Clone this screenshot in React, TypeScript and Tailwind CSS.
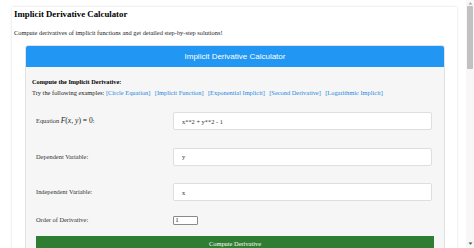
export default function App() {
  const examples = [
    "Circle Equation",
    "Implicit Function",
    "Exponential Implicit",
    "Second Derivative",
    "Logarithmic Implicit",
  ];

  return (
    <div className="flex h-[248px] w-[474px] overflow-hidden bg-white font-['Liberation_Serif',serif] text-[#222]">
      {/* PAGE */}
      <div className="min-w-0 flex-1 pl-3 pr-[9px] pt-[7px]">
        <div className="h-[260px] bg-white pl-[2px] shadow-[0_0_3px_rgba(0,0,0,0.13)]">
          <h1 className="pt-[2px] text-[8.8px] font-bold leading-[11px] text-black">
            Implicit Derivative Calculator
          </h1>
          <p className="mt-[9px] text-[6.4px] leading-[8px] text-[#222]">
            Compute derivatives of implicit functions and get detailed step-by-step solutions!
          </p>

          {/* CALCULATOR CARD */}
          <div className="ml-[11px] mr-[12px] mt-[8px] h-[220px] overflow-hidden rounded-[3px] border border-[#e2e2e2] bg-[#f6f6f6]">
            <div className="flex h-[21px] items-center justify-center bg-[#2196f3] font-['Liberation_Sans',sans-serif] text-[8px] text-white">
              Implicit Derivative Calculator
            </div>

            <div className="px-[6px] pt-[11px]">
              <div className="text-[6.3px] font-bold leading-[8px] text-black">
                Compute the Implicit Derivative:
              </div>
              <div className="mt-[2.5px] flex text-[6.4px] leading-[8px] text-[#222]">
                <span className="mr-[1.5px]">Try the following examples:</span>
                {examples.map((ex) => (
                  <span key={ex} className="mr-[4.3px] text-[#2a86e0]">
                    [{ex}]
                  </span>
                ))}
              </div>

              {/* FORM */}
              <div className="ml-[4px] w-[398px]">
                <Row label={<EquationLabel />} value="x**2 + y**2 - 1" className="mt-[15.5px]" />
                <Row label="Dependent Variable:" value="y" className="mt-[17.5px]" />
                <Row label="Independent Variable:" value="x" className="mt-[17.5px]" />

                <div className="mt-[14.5px] flex h-[9px] items-center">
                  <div className="w-[137px] text-[6.4px] text-[#333]">Order of Derivative:</div>
                  <div className="flex h-[9px] w-[25px] items-center rounded-[1px] border border-[#8a8a8a] bg-white px-[1.5px] text-[6px] text-black">
                    1
                  </div>
                </div>

                <button className="mt-[11.5px] flex h-[16px] w-[398px] items-center justify-center bg-[#2e7d32] text-[6.4px] text-white">
                  Compute Derivative
                </button>
              </div>
            </div>
          </div>
        </div>
      </div>

      {/* SCROLLBAR */}
      <div className="flex h-full w-[8px] flex-col items-center bg-[#f7f7f7]">
        <svg width="5" height="5" viewBox="0 0 5 5" className="mt-[0.5px]">
          <path d="M0.5 3.5 L2.5 1.2 L4.5 3.5 Z" fill="#a3a3a3" />
        </svg>
        <div className="h-[63px] w-[6px] rounded-[1px] bg-[#c1c1c1]" />
        <div className="flex-1" />
        <svg width="5" height="5" viewBox="0 0 5 5" className="mb-[2px]">
          <path d="M0.5 1.5 L2.5 3.8 L4.5 1.5 Z" fill="#505050" />
        </svg>
      </div>
    </div>
  );
}

function EquationLabel() {
  return (
    <span>
      Equation{" "}
      <span className="text-[7.6px] text-[#222]">
        <i>F</i>(<i>x</i>, <i>y</i>) = 0
      </span>
      :
    </span>
  );
}

function Row({
  label,
  value,
  className,
}: {
  label: React.ReactNode;
  value: string;
  className: string;
}) {
  return (
    <div className={`flex h-[18px] items-center ${className}`}>
      <div className="w-[137px] text-[6.4px] text-[#333]">{label}</div>
      <input
        readOnly
        value={value}
        className="h-[18px] w-[259px] rounded-[2px] border border-[#dedede] bg-white px-[8px] text-[6.4px] text-[#333] outline-none"
      />
    </div>
  );
}
